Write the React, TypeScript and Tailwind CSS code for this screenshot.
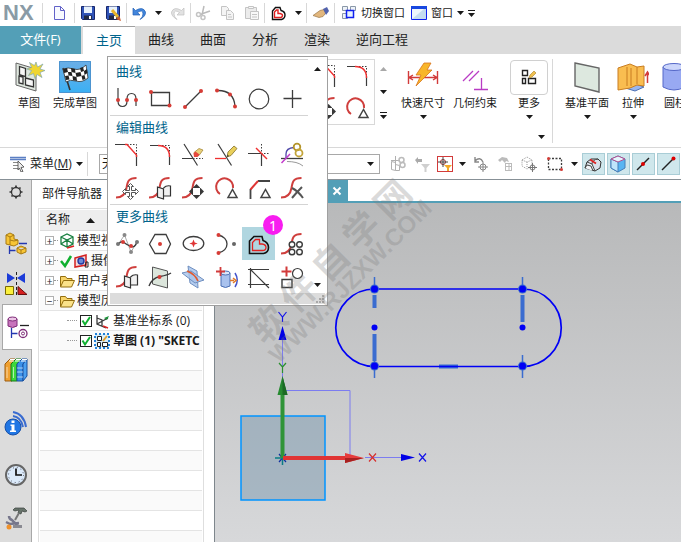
import type { ReactNode } from 'react';

type IconProps = { children: ReactNode; size?: number };

function Svg({ children, size = 26 }: IconProps) {
  return (
    <svg width={size} height={size} viewBox={`0 0 ${size} ${size}`} fill="none" stroke="#3c3c3c" strokeWidth="1" className="block shrink-0" aria-hidden="true">
      {children}
    </svg>
  );
}

function Dot({ x, y, r = 2, fill = '#d63c36' }: { x: number; y: number; r?: number; fill?: string }) {
  return <circle cx={x} cy={y} r={r} fill={fill} stroke="none" />;
}

function Caret({ up = false, muted = false }: { up?: boolean; muted?: boolean }) {
  return (
    <svg width="7" height="4" viewBox="0 0 7 4" className="block shrink-0" aria-hidden="true">
      <path d={up ? 'M0 4h7l-3.500-4z' : 'M0 0h7l-3.500 4z'} fill={muted ? '#a8a8a8' : '#1a1a1a'} />
    </svg>
  );
}

function BarCaret() {
  return (
    <svg width="7" height="7" viewBox="0 0 7 7" className="block shrink-0" aria-hidden="true">
      <path d="M0 0h7v1H0zM0 3h7l-3.500 4z" fill="#1a1a1a" />
    </svg>
  );
}

const sCurve = <path d="M22.500 3C14 3 13.500 7 12.500 13S9 22.500 2 22.500" stroke="#cf3f3d" strokeWidth="2" />;
const planes = (
  <path d="M10.500 12l6 2v10l-6-2zM16.500 13q3-3 7-2v10h-7" fill="#f1f1f1" stroke="#333" strokeWidth="1.200" />
);
const triangle = <path d="M15 22.500h9l-4.500-8z" fill="#fff" stroke="#444" strokeWidth="1.500" />;
const magnetDots = '1.500 1.500';

const icons: Record<string, ReactNode> = {
  profile: (
    <Svg>
      <path d="M4 2v13q0 5.500 4.500 5.500T13 15v-2q0-5.500 4.500-5.500T22 13v7" strokeWidth="1.200" />
      <Dot x={4} y={14} /><Dot x={13} y={14} /><Dot x={22} y={14} />
    </Svg>
  ),
  rectangle: <Svg><path d="M4.500 6.500h18v13h-18z" strokeWidth="1.300" /><Dot x={4} y={6} /><Dot x={22.5} y={19.5} /></Svg>,
  line: <Svg><path d="M5 21L21 5" strokeWidth="1.300" /><Dot x={5} y={21} /><Dot x={21} y={5} /></Svg>,
  arc: <Svg><path d="M4 4.500Q21 4 22 20.500" strokeWidth="1.300" /><Dot x={4} y={4.5} /><Dot x={17} y={8.5} /><Dot x={22} y={20.5} /></Svg>,
  circle: <Svg><circle cx="13" cy="13" r="9.800" strokeWidth="1.200" /></Svg>,
  point: <Svg><path d="M13.500 4v18M4.500 12.500h18" strokeWidth="1.300" /></Svg>,
  chamfer: (
    <Svg>
      <path d="M1 2.500h12M22.500 13v11" strokeWidth="1.200" />
      <path d="M13 2.500h9.500V13" strokeDasharray={magnetDots} />
      <path d="M11 2.500h2L22.500 13v2" stroke="#ee3030" strokeWidth="1.400" />
    </Svg>
  ),
  fillet: (
    <Svg>
      <path d="M3 3.500h9M22.500 13v10" strokeWidth="1.200" />
      <path d="M12 3.500h10.500V13" strokeDasharray={magnetDots} />
      <path d="M11 3.500Q22.500 3.500 22.500 15" stroke="#ee3030" strokeWidth="1.400" />
    </Svg>
  ),
  trim: (
    <Svg>
      <path d="M4 2l13.500 21.500M2 16.500h10.500" strokeWidth="1.200" />
      <path d="M13 16.500h10" strokeDasharray={magnetDots} />
      <path d="M14 10.500l5-4 4 1.500-4 5.500-4 1z" fill="#ead27c" stroke="#9c7c28" strokeWidth=".7" />
      <path d="M13.500 11.500l2-2 4 3-2 2.500H14z" fill="#e6493e" stroke="none" />
    </Svg>
  ),
  extend: (
    <Svg>
      <path d="M5 2l13.500 21.500" strokeWidth="1.200" />
      <path d="M2 16.500h11" stroke="#ee3030" strokeWidth="1.300" />
      <path d="M14 15l1-5 6-6 3 2.500-6 7z" fill="#e9cf5a" stroke="#83702a" strokeWidth=".8" />
      <path d="M14 15l.5-2.500 1.500 1.500z" fill="#333" stroke="none" />
    </Svg>
  ),
  corner: (
    <Svg>
      <path d="M2 11.500h13.500V24" strokeWidth="1.200" />
      <path d="M15.500 2v9.500H24" strokeDasharray={magnetDots} />
      <path d="M10 6l11 11" stroke="#ee3030" strokeWidth="1.400" />
    </Svg>
  ),
  editParam: (
    <Svg>
      <path d="M2 16.500h22" strokeWidth="1.300" />
      <path d="M7 16V12q0-6 8-6.500" stroke="#5049a8" strokeWidth="1.300" />
      <path d="M2.500 21L11 12" stroke="#c33ccc" strokeWidth="1.500" />
      <path d="M8 19.500q5 0 9 1t7 3.500" stroke="#999" />
      <circle cx="18" cy="5" r="3.300" stroke="#b5952b" strokeWidth="1.800" />
      <circle cx="20" cy="11" r="3.500" stroke="#c3a43a" strokeWidth="1.800" />
    </Svg>
  ),
  moveCurve: (
    <Svg>
      {sCurve}
      <path d="M16.500 8.500l3 3h-2v4h4v-2l3 3-3 3v-2h-4v4h2l-3 3-3-3h2v-4h-4v2l-3-3 3-3v2h4v-4h-2z" fill="#fff" stroke="#555" />
    </Svg>
  ),
  offsetMove: <Svg>{sCurve}{planes}</Svg>,
  deform: (
    <Svg>
      {sCurve}
      <path d="M13 13h7v7h-7z" fill="#fff" stroke="none" />
      <path d="M16.500 9l4 4h-8zM16.500 24l4-4h-8zM9 16.500l4-4v8zM24 16.500l-4-4v8z" fill="#383838" stroke="none" />
    </Svg>
  ),
  resize: <Svg><path d="M7 19A8.500 8.500 0 1 1 20 13" stroke="#cf3f3d" strokeWidth="2" />{triangle}</Svg>,
  resizeChamfer: (
    <Svg>
      <path d="M4.500 24V14M12 6h12" stroke="#444" strokeWidth="1.800" />
      <path d="M4.500 14.500L12 6" stroke="#df3434" strokeWidth="2" />
      {triangle}
    </Svg>
  ),
  deleteCurve: <Svg>{sCurve}<path d="M13 13q6 3 11 10M23 12q-5 5-10 11" stroke="#555" strokeWidth="2" /></Svg>,
  studioSpline: (
    <Svg>
      <path d="M4.500 13L10.500 4l6.500 17 6-10" stroke="#aaa" />
      <path d="M4 14q3-5 6-2.500t7 4 6-4.500" strokeWidth="1.300" />
      <Dot x={4} y={13} fill="#777" /><Dot x={10.5} y={4} fill="#888" /><Dot x={17} y={21} fill="#888" /><Dot x={23} y={11} fill="#777" />
      <Dot x={9} y={11} /><Dot x={17} y={15} />
    </Svg>
  ),
  polygon: <Svg><path d="M2.500 13L8 3.500h11L23.500 13 19 22.500H8z" strokeWidth="1.300" /><Dot x={13} y={13} /></Svg>,
  ellipse: <Svg><ellipse cx="13.500" cy="12.500" rx="10.300" ry="7" strokeWidth="1.300" /><path d="M13.500 8.500l1.200 3 3 1-3 1-1.200 3-1.200-3-3-1 3-1z" fill="#df3434" stroke="none" /></Svg>,
  conic: <Svg><path d="M5 4c12 2 12 16 0 18" strokeWidth="1.300" /><Dot x={5.5} y={4} /><Dot x={5.5} y={22} /><Dot x={21} y={13} fill="#666" /></Svg>,
  offset: (
    <Svg>
      <path d="M3.500 22.500V10L8 5.500h8l1 4q5.500 2 5.500 7t-5 6z" stroke="#111" strokeWidth="1.600" />
      <path d="M6.500 19.500v-8l3-3h4V13h2.500q4 .5 4 3.500t-3.500 3z" stroke="#e02020" strokeWidth="1.300" />
    </Svg>
  ),
  pattern: (
    <Svg>
      {sCurve}
      <g fill="#fff" strokeWidth="1.400"><circle cx="13" cy="13.500" r="2.800" /><circle cx="20.500" cy="13.500" r="2.800" /><circle cx="13" cy="21" r="2.800" /><circle cx="20.500" cy="21" r="2.800" /></g>
    </Svg>
  ),
  project: <Svg>{sCurve}{planes}</Svg>,
  intersectPoint: (
    <Svg>
      <path d="M5.500 3l15 4v17l-15-4z" fill="#dce6dc" stroke="#555" />
      <path d="M2 22q3-8 11-9.500T24 9" strokeWidth="1.400" />
      <Dot x={12.5} y={13} />
    </Svg>
  ),
  intersectCurve: (
    <Svg>
      <path d="M8 2l9 5 1 17-8-5z" fill="#b5cdef" stroke="#6f8fc0" />
      <path d="M2 9l9-2 13 9-9 3z" fill="#a9c4ea" fillOpacity=".8" stroke="#6f8fc0" />
      <path d="M7 7q8 3 11 10" stroke="#e0592e" strokeWidth="1.800" />
    </Svg>
  ),
  addCurve: (
    <Svg>
      <path d="M8 9v13q4.500 3 9 0V9q-4.500-3-9 0z" fill="#a9c2ee" stroke="#4b6fb4" />
      <ellipse cx="12.500" cy="9" rx="4.500" ry="2" fill="#dbe7fa" stroke="#4b6fb4" />
      <path d="M3 7.500h9M7.500 3v9" stroke="#d23b3b" strokeWidth="1.800" />
      <path d="M22 9q4.500 7 0 14" stroke="#4455cc" strokeWidth="1.500" />
      <path d="M17 16.500h4M20 14l3 2.500-3 2.500" stroke="#e07a28" strokeWidth="1.500" />
    </Svg>
  ),
  axisTri: <Svg><path d="M4.500 4v20M2 5.500h21M2 20.500h21M4.500 5.500L23 24" strokeWidth="1.200" /></Svg>,
  convert: <Svg><path d="M2.500 7.500h10M7.500 2.500v10" stroke="#d23b3b" strokeWidth="2" /><circle cx="18.500" cy="9.500" r="5" strokeWidth="1.200" /><path d="M3 15.500h10v8H3z" strokeWidth="1.400" /></Svg>,
};

const galleryGroups = [
  { title: '曲线', items: ['profile', 'rectangle', 'line', 'arc', 'circle', 'point'] },
  { title: '编辑曲线', items: ['chamfer', 'fillet', 'trim', 'extend', 'corner', 'editParam', 'moveCurve', 'offsetMove', 'deform', 'resize', 'resizeChamfer', 'deleteCurve'] },
  { title: '更多曲线', items: ['studioSpline', 'polygon', 'ellipse', 'conic', 'offset', 'pattern', 'project', 'intersectPoint', 'intersectCurve', 'addCurve', 'axisTri', 'convert'] },
];

function Separator() {
  return <span className="h-5 w-px shrink-0 bg-[#d8d8d8]" />;
}

function FloppyShape() {
  return (
    <>
      <path d="M1.500 1.500h13v13h-12l-1-1z" fill="#3054b8" stroke="#17266b" />
      <path d="M4 1.500h8V8H4z" fill="#e8f2fc" stroke="none" />
      <path d="M4 10.500h8v4H4z" fill="#222a44" stroke="none" />
      <path d="M9 11h2v3H9z" fill="#fff" stroke="none" />
    </>
  );
}

function TitleBar() {
  return (
    <header className="flex h-[26px] shrink-0 items-center bg-white text-[11px] text-[#1a1a1a]">
      <span className="w-[42px] shrink-0 pl-[3px] font-['Liberation_Sans',sans-serif] text-[22px] leading-[26px] font-bold text-[#8a9ba6]">NX</span>
      <Separator />
      <button aria-label="新建" className="flex w-[31px] justify-center">
        <Svg size={16}><path d="M3.500 1.500h6l4 4v9h-10z" fill="#f8faff" stroke="#6262c8" /><path d="M9.500 1.500v4h4" stroke="#6262c8" /></Svg>
      </button>
      <Separator />
      <div className="flex w-[51px] shrink-0 justify-around">
        <button aria-label="保存"><Svg size={16}><FloppyShape /></Svg></button>
        <button aria-label="另存为">
          <Svg size={16}><FloppyShape /><path d="M7 5l6 7" stroke="#e9b52c" strokeWidth="3" /><path d="M14.500 11l1.500 5-5-2z" fill="#c95c2c" stroke="none" /></Svg>
        </button>
      </div>
      <Separator />
      <div className="flex w-[63px] shrink-0 items-center justify-around">
        <button aria-label="撤消"><Svg size={16}><path d="M2 3v7h7L6.500 7.500Q12 4 12 9q0 3-3 5.500Q15 11 14.500 7 12 1 4.500 5.500z" fill="#4286dc" stroke="#2360b4" strokeWidth=".7" /></Svg></button>
        <Caret />
        <button aria-label="重做"><Svg size={16}><path d="M14 3v7H7l2.500-2.500Q4 4 4 9q0 3 3 5.500Q1 11 1.500 7 4 1 11.500 5.500z" fill="#e2e2e2" stroke="#c0c0c0" strokeWidth=".7" /></Svg></button>
      </div>
      <Separator />
      <div className="flex w-[73px] shrink-0 items-center justify-around">
        <button aria-label="剪切"><Svg size={16}><path d="M9 1L7 10M15 6L5 9.500" stroke="#bbb" strokeWidth="1.500" /><circle cx="3.500" cy="9.500" r="2" stroke="#c4c4c4" strokeWidth="1.500" /><circle cx="8" cy="12.500" r="2" stroke="#c4c4c4" strokeWidth="1.500" /></Svg></button>
        <button aria-label="复制"><Svg size={16}><path d="M2.500 1.500h5l2 2v7h-7z" fill="#f4f4f4" stroke="#c4c4c4" /><path d="M7.500 5.500h4l3 3v6h-7zM9 9.500h3M9 12h4" fill="#f4f4f4" stroke="#c4c4c4" /></Svg></button>
        <button aria-label="粘贴"><Svg size={16}><path d="M1.500 2.500h11v11h-11z" fill="#ececec" stroke="#c4c4c4" /><path d="M4.500 1.500h5v2h-5zM6.500 6.500h8v8h-8zM8 9.500h5M8 12h5" fill="#f8f8f8" stroke="#c4c4c4" /></Svg></button>
      </div>
      <Separator />
      <div className="flex w-[41px] shrink-0 items-center justify-around">
        <button aria-label="偏置曲线">
          <Svg size={16}><path d="M2.500 14.500V6L5.500 2.500H10l1 3q4 1 4 4.500t-3.500 4.500z" stroke="#111" strokeWidth="1.400" /><path d="M4.500 12.500V7l2-2H8v3.500h2q2.500.5 2.500 2T11 12.500z" stroke="#e02020" strokeWidth="1.400" /></Svg>
        </button>
        <Caret />
      </div>
      <Separator />
      <button aria-label="触控模式" className="flex w-[27px] justify-center">
        <Svg size={16}><path d="M0 10.500l7-5 4-1 2 3-3 4-4 1-3-1z" fill="#e2b77d" stroke="#9b7747" strokeWidth=".7" /><path d="M10 4l4-2 2 4-3 4z" fill="#5363ad" stroke="none" /></Svg>
      </button>
      <Separator />
      <button className="ml-1.5 flex shrink-0 items-center gap-1">
        <Svg size={16}><path d="M1.500 1.500h5v4h-5zM9.500 1.500h5v4h-5zM1.500 8.500h5v5h-5z" fill="#eef3f8" stroke="#8a98a8" /><path d="M5.500 5.500h7v7h-7z" fill="#e6f2ff" stroke="#1020f0" strokeWidth="1.500" /></Svg>
        切换窗口
      </button>
      <button className="ml-1.5 flex shrink-0 items-center gap-1">
        <Svg size={16}><path d="M.5 1.500h15v13H.5z" fill="#c5dcf0" stroke="#1020f0" /><path d="M0 1h16v3H0z" fill="#1848e0" stroke="none" /><path d="M1 14V4h12z" fill="#eef6fc" stroke="none" /></Svg>
        窗口
        <Caret />
      </button>
      <button aria-label="更多选项" className="ml-1"><BarCaret /></button>
    </header>
  );
}

const tabs = ['主页', '曲线', '曲面', '分析', '渲染', '逆向工程'];

function TabBar() {
  return (
    <nav className="flex h-7 shrink-0 bg-[#dbdbdb] text-[13px] text-[#222]">
      <button className="w-[81px] shrink-0 bg-[#539fb7] text-white">文件(F)</button>
      <div className="flex pl-0.5">
        {tabs.map((tab) => (
          <button
            key={tab}
            className={tab === '主页' ? 'border-t border-[#a0a0a0] bg-white px-[13px] text-[#00648c]' : 'px-[13px]'}
          >
            {tab}
          </button>
        ))}
      </div>
    </nav>
  );
}

function ToolButton({ label, icon, caret = false, className = '' }: { label: string; icon: ReactNode; caret?: boolean; className?: string }) {
  return (
    <button className={`flex shrink-0 flex-col items-center whitespace-nowrap ${className}`}>
      <span className="flex h-9 items-center">{icon}</span>
      <span className="leading-4">{label}</span>
      {caret && <span className="mt-1"><Caret /></span>}
    </button>
  );
}

function CurveGallery() {
  return (
    <div className="absolute top-0.5 left-[107px] z-20 w-[221px] border border-[#a0a0a0] bg-white pt-0.5">
      <div className="flex pl-0.5">
        <div className="w-[198px]">
          {galleryGroups.map((group) => (
            <section key={group.title} className="border-t border-[#d4d4d4]">
              <h3 className="h-[22px] pl-1.5 text-[13px] leading-[22px] text-[#00648c]">{group.title}</h3>
              <div className="grid grid-cols-6">
                {group.items.map((name) => (
                  <button
                    key={name}
                    aria-label={name}
                    className={`relative flex h-[33px] items-center justify-center ${name === 'offset' ? 'bg-[#b0d6e0]' : ''}`}
                  >
                    {icons[name]}
                    {name === 'offset' && (
                      <span className="absolute -top-3 -right-2 flex size-5 items-center justify-center rounded-full bg-[#f81cf0] font-['Noto_Sans',sans-serif] text-[14px] text-white">1</span>
                    )}
                  </button>
                ))}
              </div>
            </section>
          ))}
        </div>
        <div className="flex flex-1 flex-col items-center justify-between pt-2 pb-1.5">
          <button aria-label="向上滚动"><Caret up /></button>
          <button aria-label="向下滚动"><Caret /></button>
        </div>
      </div>
      <div className="mx-0.5 mb-px flex h-[11px] items-end justify-end bg-[#dcdcdc]">
        <svg width="9" height="9" viewBox="0 0 9 9" fill="#a8a8a8" aria-hidden="true"><path d="M6 0h2v2H6zM3 3h2v2H3zM6 3h2v2H6zM0 6h2v2H0zM3 6h2v2H3zM6 6h2v2H6z" /></svg>
      </div>
    </div>
  );
}

function Ribbon() {
  return (
    <div className="relative flex h-[94px] shrink-0 items-start border-b border-[#d8d8d8] bg-white pt-[5px] text-[11px] text-[#1a1a1a]">
      <ToolButton
        className="ml-1.5 w-[46px]"
        label="草图"
        icon={
          <Svg size={32}>
            <path d="M3 2l20 6v22L3 24z" fill="#dfe7df" stroke="#666" />
            <path d="M6.500 5.500l6 2v8l-6-2zM12.500 17l8 2v7l-8-2zM6 15l4 1v7l-4-1z" fill="#f7f7f7" stroke="#333" strokeWidth="1.300" />
            <path d="M23 1l1.500 5L30 3l-3 5 5 1.500-5 2 2 5-5-3-2 4-1.500-5-5 2 3-5-5-1.500 5-1.500-2-5 5 3z" fill="#f0d632" stroke="#7fa8b0" strokeWidth=".7" />
          </Svg>
        }
      />
      <ToolButton
        className="w-[46px]"
        label="完成草图"
        icon={
          <span className="bg-linear-to-b from-[#6aaee6] to-[#38b0f4]">
            <Svg size={32}>
              <path d="M.5.500h31v31H.5z" stroke="#4c94d0" />
              <path d="M4 7l7 22" stroke="#333" strokeWidth="1.600" />
              <path d="M4 8q5-2 11 0t12-4l2 13q-6 5-12 3T7 21z" fill="#fff" stroke="#333" strokeWidth=".8" />
              <path d="M4 8l4-1 1 4-4 1zM12 7l4 1 .5 4-4-1zM21 7l3-1 1 4-3 1zM9 11l3.500 0 1 4-4-.5zM16.500 12l5-1 1 4-5 1zM6 15l3.500-.5 1 4-3.500.5zM13.500 15l4 1 .5 4-4-1zM22.500 15l3-1 1 4-3 1zM25 10l3-2 .5 4-3 2z" fill="#222" stroke="none" />
            </Svg>
          </span>
        }
      />
      <div className="ml-5 flex h-[66px] w-[257px] shrink-0 justify-end border border-[#d8d8d8] pr-1">
        <div className="grid grid-cols-2 items-center gap-x-1.5">
          {icons.chamfer}{icons.fillet}{icons.deform}{icons.resize}
        </div>
      </div>
      <div className="flex h-[60px] w-4 shrink-0 flex-col items-center justify-between pt-2">
        <Caret up muted />
        <Caret />
        <BarCaret />
      </div>
      <ToolButton
        className="ml-1.5 w-[52px]"
        label="快速尺寸"
        caret
        icon={
          <Svg size={32}>
            <path d="M1.500 10v13M30.500 10v13M2 16.500h28M6 14l-4 2.500L6 19M26 14l4 2.500-4 2.500" stroke="#d23b3b" strokeWidth="1.400" />
            <path d="M17 2h7l-4 7h5L9 25l5-11H9z" fill="#f8b62a" stroke="#d8731c" strokeWidth=".8" />
          </Svg>
        }
      />
      <ToolButton
        className="w-[52px]"
        label="几何约束"
        icon={<Svg size={32}><path d="M4 20L14 10M10 20L20 10M22.500 17v11M15 28.500h14" stroke="#b93cc4" strokeWidth="1.300" /></Svg>}
      />
      <ToolButton
        className="ml-[9px] w-[38px]"
        label="更多"
        caret
        icon={
          <span className="flex h-[35px] w-[38px] items-center justify-center rounded border border-[#d0d0d0]">
            <Svg size={16}>
              <path d="M1.500 1.500h5v5h-5zM1.500 9.500h3v5h-3zM7.500 9.500h7v5h-7z" stroke="#222" strokeWidth="1.400" />
              <path d="M8 9l1-3 4-4 2 2-4 4z" fill="#f0c050" stroke="#b38f38" strokeWidth=".7" />
            </Svg>
          </span>
        }
      />
      <div className="flex h-[84px] shrink-0 items-end border-r border-[#d8d8d8] pb-1">
        <span className="-ml-2.5 pr-[7px]"><Caret /></span>
      </div>
      <ToolButton
        className="ml-[9px] w-[50px]"
        label="基准平面"
        caret
        icon={<Svg size={32}><path d="M4 2l24 5v24L4 25z" fill="#dde8df" stroke="#666" strokeWidth="1.400" /></Svg>}
      />
      <ToolButton
        className="w-[42px]"
        label="拉伸"
        caret
        icon={
          <Svg size={32}>
            <path d="M2 25l14-3 11 4-9 4z" fill="#9ab6ee" stroke="#4b6fb4" />
            <path d="M1 7l12-4 7 3 7-1v20l-7-1-7 3-12 2z" fill="#f9bd50" stroke="#c97d20" />
            <path d="M10 6v19M14 7v18M20 6v17" stroke="#c97d20" />
            <path d="M30.500 22V12M28 15l2.500-4 2.500 4" stroke="#d23b3b" strokeWidth="1.500" />
          </Svg>
        }
      />
      <ToolButton
        className="w-[42px]"
        label="圆柱"
        icon={
          <Svg size={32}>
            <path d="M4 6v20q11 6 22 0V6" fill="#98a9f2" stroke="#5568c8" />
            <ellipse cx="15" cy="6" rx="11" ry="3.500" fill="#ccd6fb" stroke="#5568c8" />
          </Svg>
        }
      />
      <CurveGallery />
    </div>
  );
}

function FilterSelect({ label, value, className }: { label: string; value: string; className: string }) {
  return (
    <span className={`relative flex shrink-0 items-center ${className}`}>
      <select aria-label={label} className="h-5 w-full appearance-none border border-[#a8a8a8] bg-white pl-0.5 text-[12px] leading-4">
        <option>{value}</option>
      </select>
      <span className="pointer-events-none absolute right-1.5"><Caret /></span>
    </span>
  );
}

function SelectionBar() {
  return (
    <div className="flex h-8 shrink-0 items-center overflow-hidden border-b border-[#879096] bg-white text-[12px] text-[#1a1a1a]">
      <button className="ml-2.5 flex shrink-0 items-center gap-1">
        <Svg size={16}>
          <path d="M0 1.500h16M0 3.500h16" stroke="#5b7fc4" strokeWidth="1.500" />
          <path d="M3 6.500h6M3 9.500h5M3 12.500h6" stroke="#888" />
          <path d="M8 5l6 6-3 .5 2 4-2 .5-1.500-4L8 14z" fill="#eee" stroke="#444" strokeWidth=".8" />
        </Svg>
        <span>菜单(<u>M</u>)</span>
        <Caret />
      </button>
      <span className="ml-1 h-6 w-px shrink-0 bg-[#d8d8d8]" />
      <FilterSelect label="类型过滤器" value="无选择过滤器" className="ml-[11px] w-[120px]" />
      <FilterSelect label="选择范围" value="整个装配" className="ml-1.5 w-[155px]" />
      <button aria-label="装配过滤" className="ml-2.5 shrink-0"><Svg size={16}><path d="M1.500 5.500l4 1v8l-4-1zM5.500 8.500l4 1v5h-4M5.500 0v10M1 4.500h9" stroke="#b0b0b0" /><circle cx="11.500" cy="4" r="2.500" stroke="#bbb" strokeWidth="1.500" /><circle cx="12.500" cy="9" r="2.500" stroke="#bbb" strokeWidth="1.500" /></Svg></button>
      <button aria-label="重置过滤" className="ml-2 shrink-0"><Svg size={16}><path d="M1 4l3-3v2h4v3H4v2z" fill="#aaa" stroke="none" /><path d="M7 8h9l-3.500 4v4h-2v-4z" fill="#cfcfcf" stroke="none" /></Svg></button>
      <button aria-label="点过滤" className="ml-[7px] shrink-0 border border-[#d23b3b]"><Svg size={14}><circle cx="5" cy="5" r="2.500" stroke="#933" /><path d="M5 0v10M0 5h10" stroke="#444" /><path d="M6 8h8l-3 3v3H9v-3z" fill="#f4aa28" stroke="none" /></Svg></button>
      <span className="ml-1.5"><Caret /></span>
      <button aria-label="旋转视图" className="ml-[7px] shrink-0"><Svg size={16}><path d="M2 1v5h4M2 5q5-5 8 1" stroke="#888" strokeWidth="1.400" /><circle cx="10" cy="11" r="3" stroke="#888" /><path d="M10 6v10M5 11h10" stroke="#888" /></Svg></button>
      <button aria-label="移动对象" className="ml-2 shrink-0"><Svg size={16}><path d="M1 4l4-3 5 1 2 4-3-1-1 2-3-3-2 2z" fill="#bbb" stroke="none" /><path d="M8.500 7.500h6M8.500 10.500h6M8.500 14.500h6M8.500 7v8M12 7v8M14.500 7v8" stroke="#bbb" /></Svg></button>
      <button aria-label="捕捉实体" className="ml-2 shrink-0"><Svg size={16}><path d="M1 4l5-3 5 3v6l-5 3-5-3zM1 4l5 2 5-2M6 6v6" stroke="#999" strokeDasharray="1 1" /><circle cx="11.500" cy="11.500" r="2.500" fill="#fff" stroke="#777" /><path d="M11.500 7v9M7 11.500h9" stroke="#777" /></Svg></button>
      <button aria-label="矩形选择" className="ml-2.5 shrink-0"><Svg size={16}><path d="M1.500 2.500h13v11h-13z" strokeDasharray="2 1.500" strokeWidth="1.300" /><Dot x={1.5} y={2.5} r={1.5} /><Dot x={14.5} y={13.5} r={1.5} /></Svg></button>
      <span className="ml-2"><Caret /></span>
      <div className="ml-1 flex shrink-0 gap-0.5">
        {[
          <Svg key="face" size={18}><path d="M1 13l2-6 4-3h7l3 3-1 6-5 3z" fill="#d9e0ea" stroke="#333" /><path d="M3 7l5 2 3 7M8 9q0-4 6-5M1 13l2-3 4 1 2 5" fill="#f2f5f8" stroke="#444" /><path d="M6 4.500l6 4" stroke="#d22" strokeWidth="1.800" /></Svg>,
          <Svg key="cube" size={18}><path d="M2 4l7-3 7 3v9l-7 4-7-4z" fill="#58b5f2" stroke="#457eb8" /><path d="M2 4l7 3v10l-7-4z" fill="#bfe5fb" stroke="#457eb8" /><path d="M2 4l7-3 7 3-7 3z" fill="#e6f5fd" stroke="#b05090" /></Svg>,
          <Svg key="mid" size={18}><path d="M3 15L15 3" stroke="#222" strokeWidth="1.400" /><Dot x={9} y={9} fill="#d00" /></Svg>,
          <Svg key="end" size={18}><path d="M3 15L15 3" stroke="#222" strokeWidth="1.400" /><Dot x={14.5} y={3.5} fill="#d00" /></Svg>,
        ].map((icon, i) => (
          <button key={i} aria-label={`捕捉点 ${i + 1}`} className="flex h-[22px] w-[23px] items-center justify-center border border-[#a9cdd6] bg-[#cfe7ec]">
            {icon}
          </button>
        ))}
      </div>
    </div>
  );
}

function ResourceBar() {
  return (
    <aside className="flex w-8 shrink-0 flex-col items-center border-r border-[#a8a8a8] bg-[#dcdcdc]">
      <button aria-label="设置" className="flex h-6 items-center">
        <Svg size={16}><circle cx="8" cy="8" r="4.500" stroke="#333" strokeWidth="1.300" /><path d="M8 1.500v2M8 12.500v2M1.500 8h2M12.500 8h2M3.500 3.500l1 1M11.500 11.500l1 1M12.500 3.500l-1 1M4.500 11.500l-1 1" stroke="#333" strokeWidth="1.700" /></Svg>
      </button>
      <button aria-label="装配导航器" className="mt-[18px] flex h-[42px] items-center">
        <Svg size={24}>
          <path d="M2 4l4-2 4 2v4l4 1v4l-4 2-8-2z" fill="#f8c534" stroke="#a77b14" />
          <path d="M2 4l4 2 4-2M6 6v8M6 9l4 1 4-1" stroke="#a77b14" />
          <path d="M5.500 15v8M5.500 19.500h6M15 12.500h8" stroke="#2438b0" strokeWidth="1.300" />
          <path d="M13 17l4-2 5 2v4l-5 2-4-2zM13 17l4 2 5-2M17 19v4" fill="#f8c534" stroke="#a77b14" />
        </Svg>
      </button>
      <button aria-label="约束导航器" className="flex h-10 items-center">
        <Svg size={24}>
          <path d="M3 1l8 5-8 5zM21 1l-8 5 8 5z" fill="#1c3cd8" stroke="none" />
          <path d="M12.500 0v24" strokeDasharray="3 2" stroke="#222" />
          <path d="M1.500 14.500h8v8h-8z" fill="#fbf03c" stroke="#7a6a00" />
          <path d="M14 14.500l9 8h-9z" fill="#d52020" stroke="#6a1010" />
        </Svg>
      </button>
      <button aria-label="部件导航器" className="-mr-px ml-0.5 flex h-[46px] items-center justify-center self-stretch border border-r-0 border-[#a8a8a8] bg-white">
        <Svg size={24}>
          <path d="M2 4v7q4.500 3 9 0V4" fill="#c874bc" stroke="#7e2c78" />
          <ellipse cx="6.500" cy="4" rx="4.500" ry="2" fill="#ebc4e5" stroke="#7e2c78" />
          <path d="M14 10.500h9" stroke="#222" strokeWidth="1.300" />
          <path d="M5.500 13v10M5.500 18.500h6" stroke="#2438b0" strokeWidth="1.300" />
          <circle cx="17" cy="18.500" r="4" stroke="#7e2c78" strokeWidth="1.300" /><circle cx="17" cy="18.500" r="1.500" stroke="#7e2c78" />
        </Svg>
      </button>
      <button aria-label="重用库" className="flex h-10 items-center">
        <Svg size={24}>
          <path d="M1 6l5-5h5L8 6v17H1z" fill="#f0a030" stroke="#9c5c10" />
          <path d="M7 6l5-5h5l-4 5v17H7z" fill="#3ed83a" stroke="#147a14" />
          <path d="M13 6l5-5h5l-4 5v17h-6z" fill="#3a90e8" stroke="#1850a0" />
          <path d="M19 6l4-5v17l-4 5z" fill="#4aa0f0" stroke="#1850a0" />
          <path d="M6 1.500h5M12 1.500h5M18 1.500h5M5 3h5M11 3h5M17 3h5" stroke="#fff" />
          <path d="M3 9v11M9.500 9v11M13 10h6M13 14h6M13 19h6" stroke="#fff" strokeOpacity=".6" />
        </Svg>
      </button>
      <button aria-label="网页浏览器" className="mt-3 flex h-[42px] items-center">
        <Svg size={26}>
          <circle cx="10" cy="17" r="8" fill="#2076e4" stroke="#1850a8" />
          <path d="M10 2Q21 4 23 17M10 6q8 1 10 11" stroke="#3a6cd0" strokeWidth="2" />
          <path d="M8.500 10.500h3v2.500h-3zM7.500 14.500h4v6h1.500V22H7v-1.500h1.500V16h-1z" fill="#fff" stroke="none" />
        </Svg>
      </button>
      <button aria-label="历史记录" className="mt-2.5 flex h-[42px] items-center">
        <Svg size={24}>
          <circle cx="12" cy="12" r="10" fill="#dbeafa" stroke="#666" strokeWidth="2" />
          <circle cx="12" cy="12" r="7.500" stroke="#556" strokeDasharray="1 3" />
          <path d="M12 5.500V12h6" stroke="#111" strokeWidth="1.700" />
        </Svg>
      </button>
      <button aria-label="工艺" className="mt-0.5 flex h-10 items-center">
        <Svg size={24}>
          <path d="M9 4l2-2 9 0 3 3-2 1-3-1-1 3-3-1 1-3-4 1z" fill="#68746c" stroke="#3a403c" strokeWidth=".7" />
          <path d="M15 7l-4 7" stroke="#777" strokeWidth="2" />
          <path d="M5 10q0 3 3 4l6 6M2 16l4 2 9-1" stroke="#77778c" strokeWidth="2.500" />
          <path d="M9 20.500h9" stroke="#8a8a92" strokeWidth="3" />
          <Dot x={5} y={21} r={2.5} fill="#f0922c" />
        </Svg>
      </button>
    </aside>
  );
}

function FolderIcon() {
  return <Svg size={16}><path d="M1.500 13.500v-10h5l1.500 2h5v3" fill="#f8d468" stroke="#936e10" /><path d="M1.500 14l3-6.500h11l-3 6.500z" fill="#fbe28a" stroke="#936e10" /></Svg>;
}

const treeRows = [
  {
    label: '模型视图',
    toggle: '+',
    icon: <Svg size={16}><path d="M2 4l6-3 6 3v7l-6 3-6-3zM2 4l6 3 6-3M8 7v7M2 11l6-4 6 4" stroke="#188040" strokeWidth="1.300" /><path d="M8 15l7-2" stroke="#d22" strokeWidth="1.800" /></Svg>,
  },
  {
    label: '摄像机',
    toggle: '+',
    icon: (
      <>
        <Svg size={14}><path d="M2 7l4 5 6-10" stroke="#10b030" strokeWidth="2.500" /></Svg>
        <Svg size={16}><path d="M2 5l11-3v10L2 14z" fill="#f5d8d8" stroke="#d42020" strokeWidth="1.500" /><circle cx="8" cy="8" r="3" fill="#6a8bd8" stroke="#2438a0" strokeWidth="1.400" /><path d="M13 9h2v5h-3z" stroke="#222" /></Svg>
      </>
    ),
  },
  { label: '用户表达式', toggle: '+', icon: <FolderIcon /> },
  { label: '模型历史记录', toggle: '−', icon: <FolderIcon /> },
];

function FeatureRow({ label, bold = false, icon }: { label: string; bold?: boolean; icon: ReactNode }) {
  return (
    <label className={`flex h-5 items-center border-b border-[#e4e4e4] pl-[27px] whitespace-nowrap even:bg-[#fafafa] ${bold ? "font-['Noto_Sans','Noto_Sans_CJK_SC',sans-serif] font-bold" : ''}`}>
      <span className="mr-[3px] w-2.5 shrink-0 border-t border-dotted border-[#999]" />
      <span className="relative mr-0.5 flex size-3 shrink-0">
        <input type="checkbox" defaultChecked className="size-3 appearance-none border border-[#222] bg-white" />
        <svg viewBox="0 0 12 12" className="pointer-events-none absolute inset-0" fill="none" aria-hidden="true"><path d="M2.500 5.500l2.500 4L10 2" stroke="#10b030" strokeWidth="2" /></svg>
      </span>
      {icon}
      <span className="ml-[3px]">{label}</span>
    </label>
  );
}

function PartNavigator() {
  return (
    <section className="flex w-[182px] shrink-0 flex-col bg-white pl-1.5 text-[12px] text-[#1a1a1a]">
      <h2 className="h-7 shrink-0 pl-1 leading-7">部件导航器</h2>
      <div className="mr-2.5 flex min-h-0 flex-1 flex-col overflow-hidden border border-b-0 border-[#dedede] px-px pt-px">
        <div className="flex h-[21px] shrink-0 items-center gap-4 border-b border-[#dcdcdc] bg-[#eeeeee] pl-1.5">
          名称
          <svg width="9" height="5" viewBox="0 0 9 5" aria-hidden="true"><path d="M0 5h9L4.500 0z" fill="#1a1a1a" /></svg>
        </div>
        <div>
          {treeRows.map((row) => (
            <div key={row.label} className="flex h-5 items-center border-b border-[#e4e4e4] pl-[5px] whitespace-nowrap even:bg-[#fafafa]">
              <button className="flex size-[9px] shrink-0 items-center justify-center border border-[#b0b0b0] bg-white text-[10px] leading-none">{row.toggle}</button>
              <span className="mr-px w-1 shrink-0 border-t border-dotted border-[#999]" />
              {row.icon}
              <span className="ml-0.5">{row.label}</span>
            </div>
          ))}
          <FeatureRow
            label="基准坐标系 (0)"
            icon={<Svg size={16}><path d="M3 2v9l9 4M3 11l11-6M3 5l5 2v6" strokeWidth="1.300" /><path d="M10 5l5-2-2 4z" fill="#1a9038" stroke="none" /><path d="M9 13l5 2" stroke="#d22" strokeWidth="1.500" /></Svg>}
          />
          <FeatureRow
            bold
            label={'草图 (1) "SKETC'}
            icon={<Svg size={16}><path d="M1 1h14v14H1z" fill="#d8eefa" stroke="#2080d8" strokeWidth="2" strokeDasharray="2 2" /><path d="M3.500 3.500h4v4h-4zM3.500 9.500h3v4h-3zM8.500 9.500h5v4h-5z" fill="#fff" stroke="#222" /><path d="M9 8l4-5" stroke="#e0a030" strokeWidth="2" /></Svg>}
          />
          {Array.from({ length: 24 }, (_, i) => (
            <div key={i} className="h-5 border-b border-[#e4e4e4] even:bg-[#fafafa]" />
          ))}
        </div>
      </div>
    </section>
  );
}

function ModelView() {
  return (
    <svg width="466" height="339" viewBox="215 203 466 339" fill="none" className="block shrink-0" aria-label="草图视图">
      <path d="M241 416h84v84h-84z" fill="#7897ad" fillOpacity=".48" stroke="#0094ff" strokeWidth="1.500" />
      <path d="M285 390.500h65V455M282.500 380v-42M365 457.500h38" stroke="#7c7cf0" />
      <path d="M282.500 326l-4 14h8zM401 454l14 3.500-14 3.500z" fill="#0000e6" />
      <path d="M278.500 312l4 5 4-5M282.500 317v5M419 453.500l7 8M426 453.500l-7 8" stroke="#1414e8" strokeWidth="1.200" />
      <path d="M279 363l3.500 4 3.500-4M282.500 367v6" stroke="#2a9030" strokeWidth="1.200" />
      <path d="M279 454l7 8M286 454l-7 8" stroke="#1030a0" strokeWidth="1.200" />
      <path d="M275 458h15M282.500 451v14" stroke="#0a7c84" strokeWidth="1.500" />
      <path d="M282.500 458v-64" stroke="#2f9438" strokeWidth="4" />
      <path d="M282.500 376l-5 19h10z" fill="#268a30" />
      <path d="M282.500 376v19h5z" fill="#1c6a25" />
      <path d="M283 458h64" stroke="#e03434" strokeWidth="4" />
      <path d="M364 458l-19-5v10z" fill="#e63c3c" />
      <path d="M364 458h-19v5z" fill="#a82020" />
      <path d="M369 453.500l7 8M376 453.500l-7 8" stroke="#d63030" strokeWidth="1.200" />
      <g stroke="#3a6cd0">
        <path d="M374.500 295v13M374.500 334v27M522.500 295v27M439 366.500h19" strokeWidth="4" />
        <path d="M374.500 277v12M374.500 361v17M522.500 277v12M522.500 355v23" strokeWidth="1.500" />
      </g>
      <path d="M374.500 289h148a38.500 38.500 0 0 1 0 77.500h-148a38.500 38.500 0 0 1 0-77.500z" stroke="#0000f5" strokeWidth="1.700" />
      {[374.5, 522.5].map((x) => (
        <g key={x}>
          <Dot x={x} y={289} r={4.5} fill="#3a6cd0" /><Dot x={x} y={289} r={3.5} fill="#0000f5" />
          <Dot x={x} y={366} r={4.5} fill="#3a6cd0" /><Dot x={x} y={366} r={3.5} fill="#0000f5" />
          <Dot x={x} y={327.5} r={3} fill="#0000f5" />
        </g>
      ))}
    </svg>
  );
}

function Watermark() {
  return (
    <div className="pointer-events-none absolute top-[242px] left-[214px] z-30 flex w-[250px] -rotate-45 flex-col items-center font-bold text-[#7c7c7c]/28 select-none">
      <div className="flex gap-2 text-[36px] leading-8">
        {['软', '件', '自', '学', '网'].map((char) => <span key={char}>{char}</span>)}
      </div>
      <span className="font-['Liberation_Sans',sans-serif] text-[24px] leading-6">WWW.RJZXW.COM</span>
    </div>
  );
}

export default function App() {
  return (
    <div className="relative flex h-screen flex-col overflow-hidden bg-white font-['Open_Sans','Noto_Sans_CJK_SC',sans-serif]">
      <TitleBar />
      <TabBar />
      <Ribbon />
      <SelectionBar />
      <div className="flex min-h-0 flex-1">
        <ResourceBar />
        <PartNavigator />
        <main className="flex min-w-0 flex-1 flex-col border-l border-[#7e868c]">
          <div className="flex h-[23px] shrink-0 border-b-2 border-[#539fb7] bg-white">
            <div className="flex w-[133px] items-center justify-end bg-[#539fb7] pr-1.5">
              <button aria-label="关闭">
                <Svg size={10}><path d="M1.500 1.500l7 7M8.500 1.500l-7 7" stroke="#fff" strokeWidth="2" /></Svg>
              </button>
            </div>
          </div>
          <div className="min-h-0 flex-1 overflow-hidden bg-linear-to-b from-[#b8b9ba] to-[#d7d8da]">
            <ModelView />
          </div>
        </main>
      </div>
      <Watermark />
    </div>
  );
}
